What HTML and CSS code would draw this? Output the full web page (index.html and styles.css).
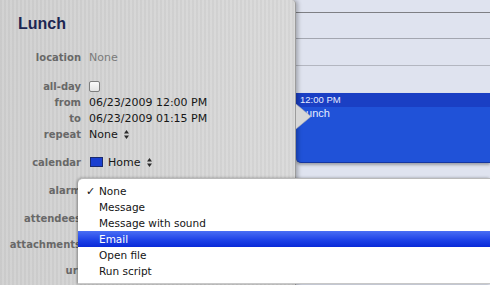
FILE: index.html
```html
<!DOCTYPE html>
<html>
<head>
<meta charset="utf-8">
<link rel="stylesheet" href="styles.css">
</head>
<body>
<div class="screen">
  <div class="panel">
    <div class="title">Lunch</div>
    <div class="rows">
      <div class="row r-location"><span class="label">location</span><span class="value muted">None</span></div>
      <div class="row r-allday"><span class="label">all-day</span><span class="value"><span class="checkbox"></span></span></div>
      <div class="row"><span class="label">from</span><span class="value">06/23/2009 12:00 PM</span></div>
      <div class="row"><span class="label">to</span><span class="value">06/23/2009 01:15 PM</span></div>
      <div class="row"><span class="label">repeat</span><span class="value">None <svg class="updown" width="5" height="9" viewBox="0 0 5 9"><polygon points="2.5,0 5,3.4 0,3.4" /><polygon points="0,5.6 5,5.6 2.5,9" /></svg></span></div>
      <div class="row r-calendar"><span class="label">calendar</span><span class="value"><span class="swatch"></span>Home <svg class="updown" width="5" height="9" viewBox="0 0 5 9"><polygon points="2.5,0 5,3.4 0,3.4" /><polygon points="0,5.6 5,5.6 2.5,9" /></svg></span></div>
      <div class="row r-alarm"><span class="label">alarm</span><span class="value"></span></div>
      <div class="row r-attendees"><span class="label">attendees</span><span class="value"></span></div>
      <div class="row r-attach"><span class="label">attachments</span><span class="value"></span></div>
      <div class="row r-url"><span class="label">url</span><span class="value"></span></div>
    </div>
  </div>
  <div class="calendar">
    <div class="slot s0"></div>
    <div class="slot s1"></div>
    <div class="slot s2"></div>
    <div class="event">
      <div class="event-time">12:00 PM</div>
      <div class="event-name">Lunch</div>
    </div>
  </div>
  <svg class="tail" width="16" height="26" viewBox="0 0 16 26"><polygon points="0,0 15,12.5 0,25" fill="#d7d7d7"/><polyline points="0,0 15,12.5 0,25" fill="none" stroke="#a8a8b0" stroke-width="0.6"/></svg>
  <div class="menu">
    <div class="item"><span class="check">✓</span>None</div>
    <div class="item"><span class="check"></span>Message</div>
    <div class="item"><span class="check"></span>Message with sound</div>
    <div class="item selected"><span class="check"></span>Email</div>
    <div class="item"><span class="check"></span>Open file</div>
    <div class="item"><span class="check"></span>Run script</div>
  </div>
</div>
</body>
</html>
```

FILE: styles.css
```css
html, body {
  margin: 0;
  padding: 0;
}
body {
  width: 490px;
  height: 285px;
  overflow: hidden;
  background: #dfe3ef;
}
.screen {
  position: relative;
  display: flex;
  width: 490px;
  height: 285px;
}
.panel {
  position: relative;
  z-index: 2;
  width: 296px;
  flex: none;
  height: 285px;
  box-sizing: border-box;
  padding-top: 14px;
  border-right: 1px solid #9c9c9c;
  border-top-right-radius: 4px;
  background:
    linear-gradient(90deg, rgba(0,0,0,0.03), rgba(255,255,255,0.06)),
    repeating-linear-gradient(90deg, #d1d1d1 0 2px, #d9d9d9 2px 4px);
  box-shadow: 2px 0 4px rgba(0,0,0,0.28);
  font-family: "DejaVu Sans", sans-serif;
}
.title {
  padding-left: 18px;
  font-family: "Liberation Sans", Arial, sans-serif;
  font-weight: bold;
  font-size: 16px;
  line-height: 20px;
  height: 20px;
  color: #1c2652;
}
.rows {
  display: flex;
  flex-direction: column;
}
.row {
  display: grid;
  grid-template-columns: 81px 1fr;
  column-gap: 8px;
  align-items: center;
  height: 16px;
}
.label {
  text-align: right;
  font-weight: bold;
  font-size: 10px;
  color: #686868;
  white-space: nowrap;
}
.value {
  display: flex;
  align-items: center;
  font-size: 11px;
  color: #161616;
  white-space: pre;
}
.muted {
  color: #7a7a7a;
}
.r-location { margin-top: 15px; }
.r-allday { margin-top: 14px; height: 15px; }
.r-calendar { margin-top: 12px; }
.r-alarm { margin-top: 12px; }
.r-attendees { margin-top: 12px; }
.r-attach { margin-top: 10px; }
.r-url { margin-top: 10px; }
.checkbox {
  display: inline-block;
  width: 9px;
  height: 9px;
  border: 1px solid #7e7e7e;
  border-radius: 2px;
  background: linear-gradient(#fbfbfb, #e4e4e4);
}
.swatch {
  display: inline-block;
  width: 11px;
  height: 8px;
  border: 1px solid #1a2a6e;
  background: #1a3fd0;
  margin-right: 5px;
  margin-left: 1px;
}
.updown {
  margin-left: 3px;
  fill: #2a2a2a;
}
.calendar {
  flex: 1;
  display: flex;
  flex-direction: column;
  background: #dfe3ef;
}
.slot { flex: none; }
.s0 { height: 12px; border-bottom: 1px solid #7e7f84; }
.s1 { height: 25px; border-bottom: 1px solid #a3a6b0; }
.s2 { height: 26px; border-bottom: 1px solid #b3b6c0; }
.event {
  margin-top: 27px;
  height: 69px;
  background: #2052d8;
  border-bottom-left-radius: 5px;
  border-bottom: 1px solid #1536a0;
  box-shadow: 0 2px 3px rgba(0,0,0,0.3);
  font-family: "Liberation Sans", Arial, sans-serif;
  color: #e6ecff;
}
.event-time {
  height: 14px;
  line-height: 14px;
  background: #1a3fc4;
  padding-left: 4px;
  font-size: 9.5px;
}
.event-name {
  padding-left: 4px;
  line-height: 13px;
  font-size: 11px;
}
.tail {
  position: absolute;
  z-index: 3;
  left: 296px;
  top: 104px;
}
.menu {
  position: absolute;
  z-index: 4;
  left: 78px;
  top: 178px;
  right: 0;
  box-sizing: border-box;
  padding: 4px 0 4px;
  background: #ffffff;
  border-top: 1px solid #b9b9b9;
  border-bottom: 1px solid #c8c8c8;
  border-top-left-radius: 5px;
  box-shadow: -1px 0 3px rgba(0,0,0,0.35);
  font-family: "DejaVu Sans", sans-serif;
  font-size: 10.5px;
  color: #141414;
}
.item {
  display: flex;
  align-items: center;
  height: 16px;
  white-space: nowrap;
}
.check {
  width: 13px;
  padding-left: 8px;
  flex: none;
  font-size: 11px;
}
.selected {
  background: linear-gradient(#4a6ff4, #1c40e6 60%, #0a2ad8);
  color: #ffffff;
}
```
